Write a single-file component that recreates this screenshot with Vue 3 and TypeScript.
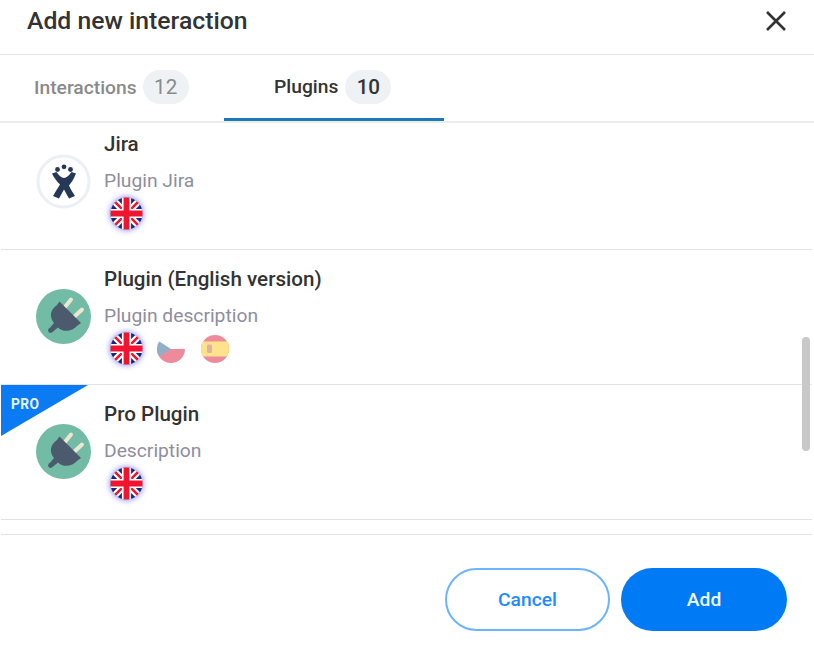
<script setup lang="ts">
type Flag = 'uk' | 'cz' | 'es'
interface Plugin {
  name: string
  desc: string
  icon: 'jira' | 'plug'
  flags: Flag[]
  pro?: boolean
}
const plugins: Plugin[] = [
  { name: 'Jira', desc: 'Plugin Jira', icon: 'jira', flags: ['uk'] },
  { name: 'Plugin (English version)', desc: 'Plugin description', icon: 'plug', flags: ['uk', 'cz', 'es'] },
  { name: 'Pro Plugin', desc: 'Description', icon: 'plug', flags: ['uk'], pro: true },
]
</script>

<template>
  <div class="dialog">
    <header class="head">
      <h1 class="title">Add new interaction</h1>
      <button class="close" aria-label="Close">
        <svg width="20" height="20" viewBox="0 0 20 20"><path d="M1 1 L19 19 M19 1 L1 19" stroke="#333" stroke-width="2.6" fill="none" /></svg>
      </button>
    </header>

    <nav class="tabs">
      <div class="tab first"><span>Interactions</span><span class="badge">12</span></div>
      <div class="tab active"><span>Plugins</span><span class="badge">10</span></div>
    </nav>

    <section class="list">
      <div class="rows">
        <article v-for="p in plugins" :key="p.name" class="row">
          <div v-if="p.pro" class="ribbon"><span class="pro">PRO</span></div>
          <svg v-if="p.icon === 'jira'" class="icon" viewBox="0 0 55 55">
            <circle cx="27.5" cy="27.5" r="25.5" fill="#fff" stroke="#e9f0f6" stroke-width="3" />
            <g fill="#253858">
              <circle cx="21.5" cy="15.5" r="2.4" />
              <circle cx="28" cy="12.8" r="2.4" />
              <circle cx="34.5" cy="15.5" r="2.4" />
              <path d="M16 19.5 L20.5 18 C23 21.5 25.5 24 28 24 C30.5 24 33 21.5 35.5 18 L40 19.5 C38 25 35 29 33 31.5 C34.5 35 37 39 39 42 L33 44.5 C31 41 29.5 38 28 35.5 C26.5 38 25 41 23 44.5 L17 42 C19.5 37.5 22.5 33 24 30.5 C21 27.5 18 24 16 19.5 Z" />
            </g>
          </svg>
          <svg v-else class="icon" viewBox="0 0 55 55">
            <circle cx="27.5" cy="27.5" r="27.5" fill="#72bba5" />
            <path d="M29 18 L35 10.5" stroke="#ece7d2" stroke-width="4" stroke-linecap="round" />
            <path d="M39 27 L46 20.5" stroke="#ece7d2" stroke-width="4" stroke-linecap="round" />
            <path d="M23.5 12.5 L45 34 L41.5 36.5 C36 43 27 43.5 22 38.5 L16.5 43 L13 40 L18 34 C13 28 14 21 21 16 Z" fill="#4c5a6e" />
            <circle cx="14.5" cy="41.5" r="2.4" fill="#4c5a6e" />
          </svg>
          <div class="info">
            <div class="name">{{ p.name }}</div>
            <div class="desc">{{ p.desc }}</div>
            <div class="flags">
              <template v-for="f in p.flags" :key="f">
                <svg v-if="f === 'uk'" class="flag uk" viewBox="0 0 34 34">
                  <defs><clipPath id="ukc"><circle cx="17" cy="17" r="16.5" /></clipPath></defs>
                  <g clip-path="url(#ukc)">
                    <rect width="34" height="34" fill="#1a2380" />
                    <path d="M0 0 L34 34 M34 0 L0 34" stroke="#fff" stroke-width="7" />
                    <path d="M0 0 L34 34 M34 0 L0 34" stroke="#f0142f" stroke-width="2.6" />
                    <path d="M17 0 V34 M0 17 H34" stroke="#fff" stroke-width="9.5" />
                    <path d="M17 0 V34 M0 17 H34" stroke="#f0142f" stroke-width="6" />
                  </g>
                </svg>
                <svg v-else-if="f === 'cz'" class="flag faded" viewBox="0 0 28 28">
                  <defs><clipPath id="czc"><circle cx="14" cy="14" r="14" /></clipPath></defs>
                  <g clip-path="url(#czc)">
                    <rect width="28" height="28" fill="#fff" />
                    <rect y="14" width="28" height="14" fill="#d80027" />
                    <path d="M0 5 L14 14 L0 23 Z" fill="#0f4f8b" />
                  </g>
                </svg>
                <svg v-else class="flag faded" viewBox="0 0 28 28">
                  <defs><clipPath id="esc"><circle cx="14" cy="14" r="14" /></clipPath></defs>
                  <g clip-path="url(#esc)">
                    <rect width="28" height="28" fill="#d80027" />
                    <rect y="6.5" width="28" height="15" fill="#ffc300" />
                    <rect x="6" y="9.5" width="5" height="8.5" rx="1.5" fill="#b5562c" />
                  </g>
                </svg>
              </template>
            </div>
          </div>
        </article>
      </div>
      <div class="thumb"></div>
    </section>

    <footer class="foot">
      <button class="btn cancel">Cancel</button>
      <button class="btn add">Add</button>
    </footer>
  </div>
</template>

<style>
html, body { margin: 0; background: #fff; }
</style>

<style scoped>
.dialog {
  width: 814px;
  height: 646px;
  display: flex;
  flex-direction: column;
  background: #fff;
  overflow: hidden;
  font-family: Roboto, "Liberation Sans", sans-serif;
  color: #333;
}
.head {
  flex: none;
  display: flex;
  align-items: center;
  justify-content: space-between;
  padding: 0 27px 12px;
  height: 42px;
  border-bottom: 1px solid #e6e6e6;
}
.title {
  margin: 0;
  font-size: 24.75px;
  font-weight: 500;
  line-height: 42px;
  color: #333;
}
.close {
  border: 0;
  background: none;
  padding: 0;
  display: flex;
  margin-right: 1px;
}
.tabs {
  height: 66px;
  flex: none;
  display: flex;
  padding-left: 34px;
  border-bottom: 2px solid #ececec;
}
.tab {
  display: flex;
  align-items: center;
  gap: 6px;
  height: 64px;
  font-size: 19.25px;
  font-weight: 500;
  color: #8a8a8a;
}
.tab.first { width: 190px; }
.tab.active {
  width: 220px;
  box-sizing: border-box;
  padding-left: 50px;
  gap: 7px;
  color: #333;
  height: 66px;
  border-bottom: 3px solid #1a7ab8;
  margin-bottom: -1px;
}
.badge {
  width: 46px;
  height: 34px;
  border-radius: 17px;
  background: #eef2f5;
  display: flex;
  align-items: center;
  justify-content: center;
  font-weight: 400;
  font-size: 20.6px;
}
.tab.active .badge { font-weight: 500; }
.list {
  position: relative;
  flex: none;
  height: 411px;
  overflow: hidden;
  padding: 0 2px 0 1px;
}
.rows { margin-top: -8px; }
.row {
  position: relative;
  height: 134px;
  display: flex;
  align-items: center;
  gap: 13px;
  padding-left: 35px;
  border-bottom: 1px solid #e3e3e3;
}
.ribbon {
  position: absolute;
  left: 0;
  top: 0;
  width: 87px;
  height: 51px;
  background: #0a7bf2;
  clip-path: polygon(0 0, 100% 0, 0 100%);
}
.pro {
  position: absolute;
  left: 10px;
  top: 11px;
  font-size: 13.75px;
  line-height: 16px;
  font-weight: 700;
  color: #e8f3ff;
  letter-spacing: 0.4px;
}
.icon {
  width: 55px;
  height: 55px;
  flex: none;
  margin-top: -1px;
}
.info {
  align-self: flex-start;
  padding-top: 14px;
}
.name {
  font-size: 20.625px;
  line-height: 30px;
  font-weight: 500;
  color: #333;
}
.desc {
  margin-top: 7px;
  font-size: 19.25px;
  line-height: 30px;
  color: #8e8e9e;
}
.flags {
  display: flex;
  align-items: center;
  margin-top: 1px;
  padding-left: 6px;
  height: 33px;
  gap: 14px;
}
.flag { width: 28px; height: 28px; flex: none; }
.flag.uk {
  width: 33px;
  height: 33px;
  filter: drop-shadow(0 0 3px rgba(30, 30, 230, 0.6));
}
.flag.faded { opacity: 0.45; }
.flag.faded + .flag.faded { margin-left: 2px; }
.thumb {
  position: absolute;
  left: 802px;
  top: 214px;
  width: 8px;
  height: 114px;
  border-radius: 4px;
  background: #c8c8c8;
}
.foot {
  flex: 1;
  display: flex;
  justify-content: flex-end;
  align-items: flex-start;
  gap: 11px;
  margin: 0 2px 0 1px;
  padding: 33px 25px 0 0;
  border-top: 1px solid #e3e3e3;
}
.btn {
  width: 166px;
  height: 63px;
  border-radius: 32px;
  font-family: inherit;
  font-size: 19.25px;
  font-weight: 500;
  box-sizing: border-box;
}
.cancel {
  width: 165px;
  background: #fff;
  border: 2px solid #6cb4fc;
  color: #1f8bff;
}
.add {
  background: #007bf5;
  border: 0;
  color: #f2f8ff;
}
</style>
